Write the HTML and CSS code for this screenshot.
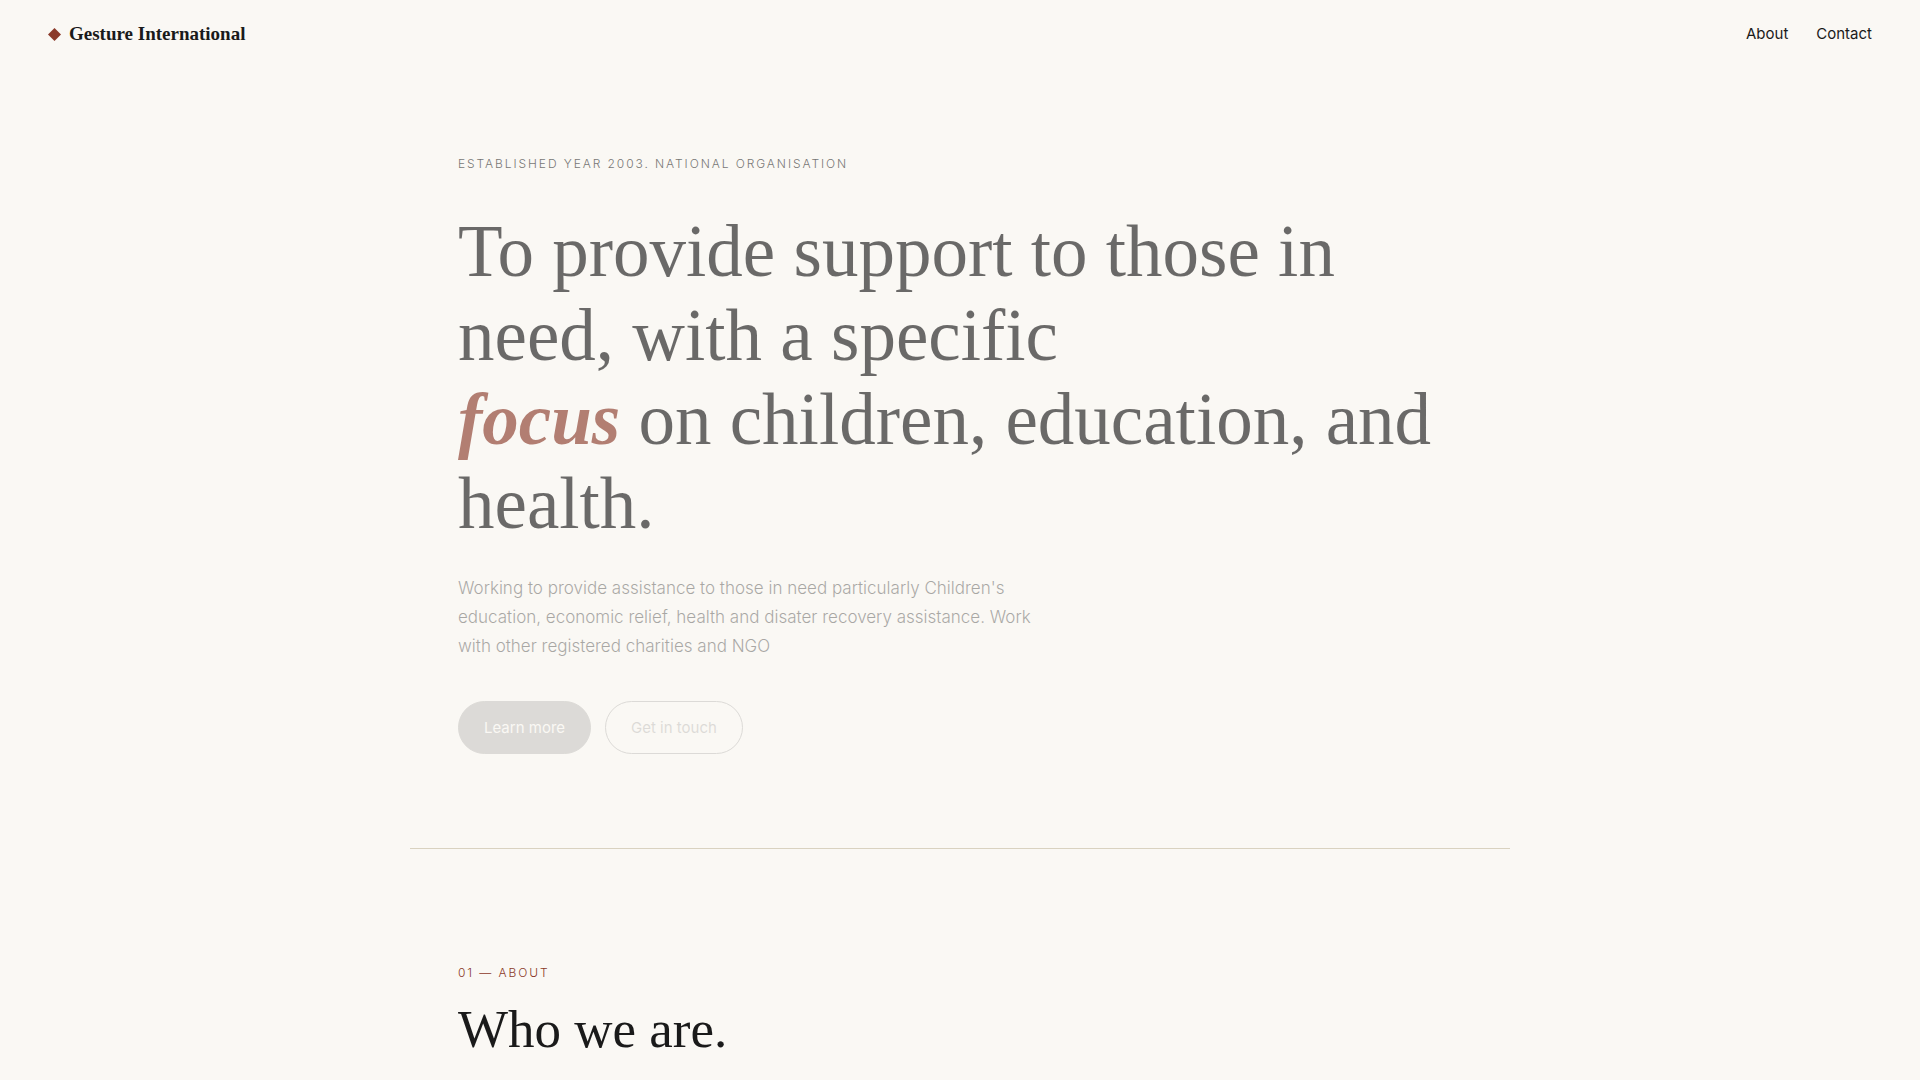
FILE: index.html
```
<!DOCTYPE html>
<html lang="en">

<head>
    <meta charset="UTF-8">
    <meta name="viewport" content="width=device-width, initial-scale=1.0">
    <title>Gesture International</title>
    <link rel="stylesheet" href="styles.css">
</head>

<body>
    <header class="site-header">
        <a class="logo" href="#top">
            <svg class="logo-mark" viewBox="0 0 14 14" aria-hidden="true"><path d="M7 0 14 7 7 14 0 7z" /></svg>
            <span>Gesture International</span>
        </a>
        <nav class="nav">
            <a href="#about">About</a>
            <a href="#contact">Contact</a>
        </nav>
    </header>

    <main id="top">
        <section class="hero">
            <p class="eyebrow">Established year 2003. National Organisation</p>
            <h1>To provide support to those in need, with a specific<br><em>focus</em> on children, education, and health.</h1>
            <p class="lead">Working to provide assistance to those in need particularly Children's education, economic relief, health and disater recovery assistance. Work with other registered charities and NGO</p>
            <div class="actions">
                <a class="btn btn-primary" href="#about">Learn more</a>
                <a class="btn btn-ghost" href="#contact">Get in touch</a>
            </div>
        </section>

        <section class="section" id="about">
            <p class="section-label">01 — About</p>
            <h2>Who we are.</h2>
        </section>
    </main>
</body>

</html>
```

FILE: styles.css
```
:root {
    --bg: #faf8f4;
    --ink: #1a1a1a;
    --accent: #8b3a2a;
    --line: #d9d2c0;
    --serif: "Liberation Serif", serif;
    --sans: Inter, "Liberation Sans", sans-serif;
}

* {
    box-sizing: border-box;
    margin: 0;
    padding: 0;
}

body {
    background: var(--bg);
    color: var(--ink);
    font-family: var(--sans);
    font-size: 17px;
    line-height: 29px;
}

a {
    color: inherit;
    text-decoration: none;
}

/* header */
.site-header {
    display: flex;
    justify-content: space-between;
    align-items: center;
    padding: 20px 48px;
}

.logo {
    display: flex;
    align-items: center;
    gap: 8px;
    font-family: var(--serif);
    font-size: 19px;
    font-weight: 700;
    line-height: 28px;
}

.logo-mark {
    width: 13px;
    height: 13px;
    fill: var(--accent);
}

.nav {
    display: flex;
    gap: 28px;
    font-size: 15px;
    font-weight: 400;
    line-height: 28px;
}

/* hero */
.hero,
.section {
    max-width: 1100px;
    margin: 0 auto;
    padding: 84px 48px 94px;
}

.eyebrow,
.section-label {
    font-size: 12px;
    font-weight: 300;
    line-height: 24px;
    letter-spacing: 0.16em;
    text-transform: uppercase;
}

.eyebrow {
    margin-bottom: 34px;
    opacity: 0.6;
}

h1,
h2 {
    font-family: var(--serif);
    font-weight: 400;
}

h1 {
    margin-bottom: 28px;
    font-size: 73px;
    line-height: 84px;
    opacity: 0.64;
}

h1 em {
    display: inline-block;
    color: var(--accent);
    font-weight: 700;
}

.lead {
    max-width: 580px;
    margin-bottom: 40px;
    font-weight: 300;
    opacity: 0.36;
}

.actions {
    display: flex;
    gap: 14px;
    opacity: 0.13;
}

.btn {
    padding: 12px 25px;
    border: 1px solid var(--ink);
    border-radius: 999px;
    font-size: 15px;
    font-weight: 400;
    line-height: 27px;
}

.btn-primary {
    background: var(--ink);
    color: var(--bg);
}

/* sections */
.section {
    padding-top: 112px;
    border-top: 1px solid var(--line);
}

.section-label {
    margin-bottom: 16px;
    color: var(--accent);
}

h2 {
    font-size: 53px;
    line-height: 56px;
}
```
